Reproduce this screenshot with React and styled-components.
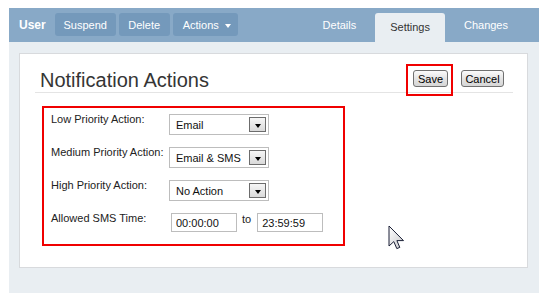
import styled, { createGlobalStyle } from "styled-components";

const GlobalStyle = createGlobalStyle`
  body {
    margin: 8px 8px 0 9px;
    font-family: "Liberation Sans", Arial, sans-serif;
    background: #ffffff;
  }
`;

const rows = [
  { label: "Low Priority Action:", value: "Email" },
  { label: "Medium Priority Action:", value: "Email & SMS" },
  { label: "High Priority Action:", value: "No Action" },
];

export default function App() {
  return (
    <Page>
      <GlobalStyle />
      <TopBar>
        <UserLabel>User</UserLabel>
        <BarButtons>
          <BarButton $w={61}>Suspend</BarButton>
          <BarButton $w={51}>Delete</BarButton>
          <BarButton $w={65} $menu>
            Actions <Caret />
          </BarButton>
        </BarButtons>
        <Tabs>
          <Tab>Details</Tab>
          <Tab $active>Settings</Tab>
          <Tab>Changes</Tab>
        </Tabs>
      </TopBar>
      <Content>
        <Panel>
          <Header>
            <Title>Notification Actions</Title>
            <HeaderButtons>
              <Marked>
                <FormButton $w={35}>Save</FormButton>
              </Marked>
              <FormButton $w={43}>Cancel</FormButton>
            </HeaderButtons>
          </Header>
          <FormBox>
            {rows.map((r) => (
              <Row key={r.label}>
                <Label>{r.label}</Label>
                <Select>
                  <span>{r.value}</span>
                  <DropButton />
                </Select>
              </Row>
            ))}
            <Row>
              <Label>Allowed SMS Time:</Label>
              <TimeInput readOnly defaultValue="00:00:00" $first />
              <To>to</To>
              <TimeInput readOnly defaultValue="23:59:59" />
            </Row>
          </FormBox>
          <Cursor viewBox="0 0 17 25" width="17" height="25">
            <defs>
              <linearGradient id="cur" x1="0" y1="0" x2="1" y2="1">
                <stop offset="0" stopColor="#ffffff" />
                <stop offset="1" stopColor="#c8c8cc" />
              </linearGradient>
            </defs>
            <path
              d="M1 1 V21 L5.8 16.6 L8.8 23.6 L11.8 22.4 L8.9 15.6 H15.5 Z"
              fill="url(#cur)"
              stroke="#1a1f36"
              strokeWidth="1"
              strokeLinejoin="round"
            />
          </Cursor>
        </Panel>
      </Content>
    </Page>
  );
}

const Page = styled.div`
  width: 530px;
`;

const TopBar = styled.div`
  display: flex;
  align-items: flex-start;
  height: 34px;
  padding: 0 16px 0 10px;
  background: #88a9c7;
  color: #ffffff;
  font-size: 11px;
`;

const UserLabel = styled.div`
  font-size: 12px;
  font-weight: bold;
  line-height: 34px;
  margin-right: 9px;
`;

const BarButtons = styled.div`
  display: flex;
  gap: 3px;
  margin-top: 5px;
`;

const BarButton = styled.div`
  box-sizing: border-box;
  width: ${({ $w }) => $w}px;
  height: 23px;
  display: flex;
  align-items: center;
  justify-content: ${({ $menu }) => ($menu ? "flex-start" : "center")};
  padding-left: ${({ $menu }) => ($menu ? "10px" : "0")};
  gap: 6px;
  background: #7499bb;
  border-radius: 3px;
  white-space: nowrap;
`;

const Caret = styled.span`
  width: 0;
  height: 0;
  border-left: 3.5px solid transparent;
  border-right: 3.5px solid transparent;
  border-top: 4px solid #ffffff;
  margin-top: 2px;
`;

const Tabs = styled.div`
  display: flex;
  gap: 4px;
  margin-left: auto;
  margin-top: 5px;
`;

const Tab = styled.div`
  height: 29px;
  box-sizing: border-box;
  padding: ${({ $active }) => ($active ? "8px" : "6px")} 15px 0;
  line-height: 13px;
  border-radius: 3px 3px 0 0;
  background: ${({ $active }) => ($active ? "#e9eef2" : "transparent")};
  color: ${({ $active }) => ($active ? "#333333" : "#ffffff")};
`;

const Content = styled.div`
  background: #e9eef2;
  padding: 11px 11px 25px 10px;
`;

const Panel = styled.div`
  position: relative;
  height: 213px;
  background: #ffffff;
  border: 1px solid #d8dadd;
`;

const Header = styled.div`
  display: flex;
  align-items: flex-end;
  justify-content: space-between;
  height: 38px;
  margin: 0 14px 0 15px;
  padding: 0 9px 0 5px;
  border-bottom: 1px solid #e4e4e4;
`;

const Title = styled.h1`
  margin: 0;
  font-size: 20px;
  line-height: 24px;
  font-weight: normal;
  color: #353535;
`;

const HeaderButtons = styled.div`
  display: flex;
  gap: 13px;
  margin-bottom: 5px;
`;

const Marked = styled.span`
  position: relative;
  display: flex;

  &::after {
    content: "";
    position: absolute;
    inset: -6px -5px -9px -7px;
    border: 2px solid #f00000;
    pointer-events: none;
  }
`;

const FormButton = styled.button`
  box-sizing: border-box;
  width: ${({ $w }) => $w}px;
  height: 17px;
  padding: 0;
  border: 1px solid #707070;
  border-radius: 3px;
  background: linear-gradient(#fbfbfb, #e4e4e4 50%, #d6d6d6);
  font-family: "Liberation Sans", Arial, sans-serif;
  font-size: 11px;
  color: #000000;
`;

const FormBox = styled.div`
  display: flex;
  flex-direction: column;
  gap: 12px;
  width: 299px;
  margin: 13px 0 0 22px;
  padding: 6px 0 10px 7px;
  box-sizing: content-box;
  border: 2px solid #f00000;
  width: 292px;
`;

const Row = styled.div`
  display: flex;
  align-items: flex-start;
  height: 21px;
`;

const Label = styled.div`
  width: 118px;
  flex: none;
  margin-top: -1px;
  font-size: 11px;
  line-height: 13px;
  color: #222222;
  white-space: nowrap;
`;

const Select = styled.div`
  box-sizing: border-box;
  width: 100px;
  height: 21px;
  display: flex;
  align-items: center;
  justify-content: space-between;
  padding: 0 2px 0 6px;
  border: 1px solid #bdbdbd;
  font-size: 11px;
  color: #111111;
`;

const DropButton = styled.span`
  box-sizing: border-box;
  width: 17px;
  height: 15px;
  display: flex;
  align-items: center;
  justify-content: center;
  padding-top: 3px;
  border: 1px solid #6c6c6c;
  background: linear-gradient(#f6f6f6, #d9d9d9);

  &::before {
    content: "";
    border-left: 3.5px solid transparent;
    border-right: 3.5px solid transparent;
    border-top: 4px solid #000000;
  }
`;

const TimeInput = styled.input`
  box-sizing: border-box;
  width: 66px;
  height: 19px;
  margin: 0 0 0 ${({ $first }) => ($first ? "2px" : "0")};
  padding: 0 0 0 4px;
  border: 1px solid #bdbdbd;
  font-family: "Liberation Sans", Arial, sans-serif;
  font-size: 11px;
  color: #111111;
  outline: none;
`;

const To = styled.span`
  margin: 0 6px 0 5px;
  font-size: 11px;
  line-height: 13px;
  color: #222222;
`;

const Cursor = styled.svg`
  position: absolute;
  left: 368px;
  top: 171px;
`;
